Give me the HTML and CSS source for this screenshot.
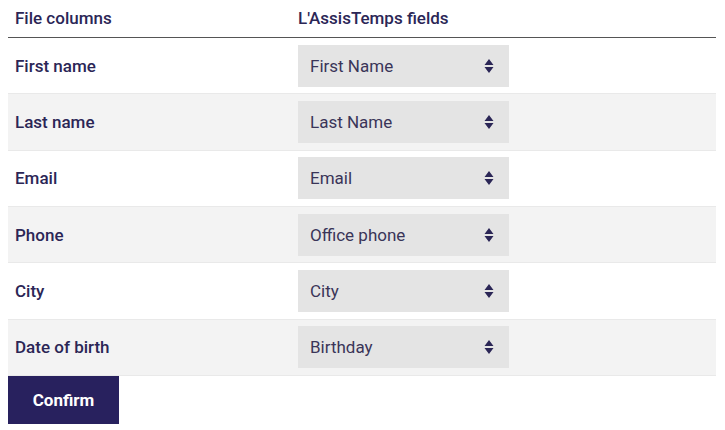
FILE: index.html
```html
<!DOCTYPE html>
<html>
<head>
<meta charset="utf-8">
<link rel="stylesheet" href="styles.css">
</head>
<body>
<div class="mapper">
  <div class="head">
    <div class="col1">File columns</div>
    <div class="col2">L'AssisTemps fields</div>
  </div>
  <div class="row"><div class="col1 label">First name</div><div class="col2"><div class="select"><span>First Name</span><svg class="arrows" viewBox="0 0 10 16" width="10" height="16"><path d="M5 1 L9.5 7 H0.5 Z M0.5 9 H9.5 L5 15 Z" fill="#2b2656"/></svg></div></div></div>
  <div class="row alt"><div class="col1 label">Last name</div><div class="col2"><div class="select"><span>Last Name</span><svg class="arrows" viewBox="0 0 10 16" width="10" height="16"><path d="M5 1 L9.5 7 H0.5 Z M0.5 9 H9.5 L5 15 Z" fill="#2b2656"/></svg></div></div></div>
  <div class="row"><div class="col1 label">Email</div><div class="col2"><div class="select"><span>Email</span><svg class="arrows" viewBox="0 0 10 16" width="10" height="16"><path d="M5 1 L9.5 7 H0.5 Z M0.5 9 H9.5 L5 15 Z" fill="#2b2656"/></svg></div></div></div>
  <div class="row alt"><div class="col1 label">Phone</div><div class="col2"><div class="select"><span>Office phone</span><svg class="arrows" viewBox="0 0 10 16" width="10" height="16"><path d="M5 1 L9.5 7 H0.5 Z M0.5 9 H9.5 L5 15 Z" fill="#2b2656"/></svg></div></div></div>
  <div class="row"><div class="col1 label">City</div><div class="col2"><div class="select"><span>City</span><svg class="arrows" viewBox="0 0 10 16" width="10" height="16"><path d="M5 1 L9.5 7 H0.5 Z M0.5 9 H9.5 L5 15 Z" fill="#2b2656"/></svg></div></div></div>
  <div class="row alt"><div class="col1 label">Date of birth</div><div class="col2"><div class="select"><span>Birthday</span><svg class="arrows" viewBox="0 0 10 16" width="10" height="16"><path d="M5 1 L9.5 7 H0.5 Z M0.5 9 H9.5 L5 15 Z" fill="#2b2656"/></svg></div></div></div>
  <button class="confirm">Confirm</button>
</div>
</body>
</html>
```
FILE: styles.css
```css
body {
  margin: 8px;
  font-family: Roboto, "Liberation Sans", sans-serif;
  color: #2b2656;
  background: #fff;
}
.mapper {
  width: 708px;
}
.head {
  display: flex;
  align-items: flex-start;
  height: 29px;
  line-height: 20px;
  border-bottom: 1px solid #555;
  font-size: 17px;
  font-weight: 500;
}
.col1 {
  width: 290px;
  padding-left: 7px;
  box-sizing: border-box;
}
.col2 {
  flex: 1;
}
.row {
  display: flex;
  align-items: center;
  height: 56.33px;
  border-bottom: 1px solid #e9e9e9;
  box-sizing: border-box;
}
.row.alt {
  background: #f3f3f3;
}
.label {
  font-size: 17px;
  font-weight: 500;
}
.select {
  width: 211px;
  height: 42px;
  background: #e4e4e4;
  display: flex;
  align-items: center;
  justify-content: space-between;
  padding: 0 15px 0 12px;
  box-sizing: border-box;
  font-size: 17px;
  color: #3a3558;
}
.arrows {
  display: block;
}
.confirm {
  display: block;
  width: 111px;
  height: 48px;
  border: none;
  background: #28215e;
  color: #fff;
  font-family: Roboto, "Liberation Sans", sans-serif;
  font-size: 17px;
  font-weight: 700;
  padding: 0;
  margin: 0;
  cursor: pointer;
}
```
